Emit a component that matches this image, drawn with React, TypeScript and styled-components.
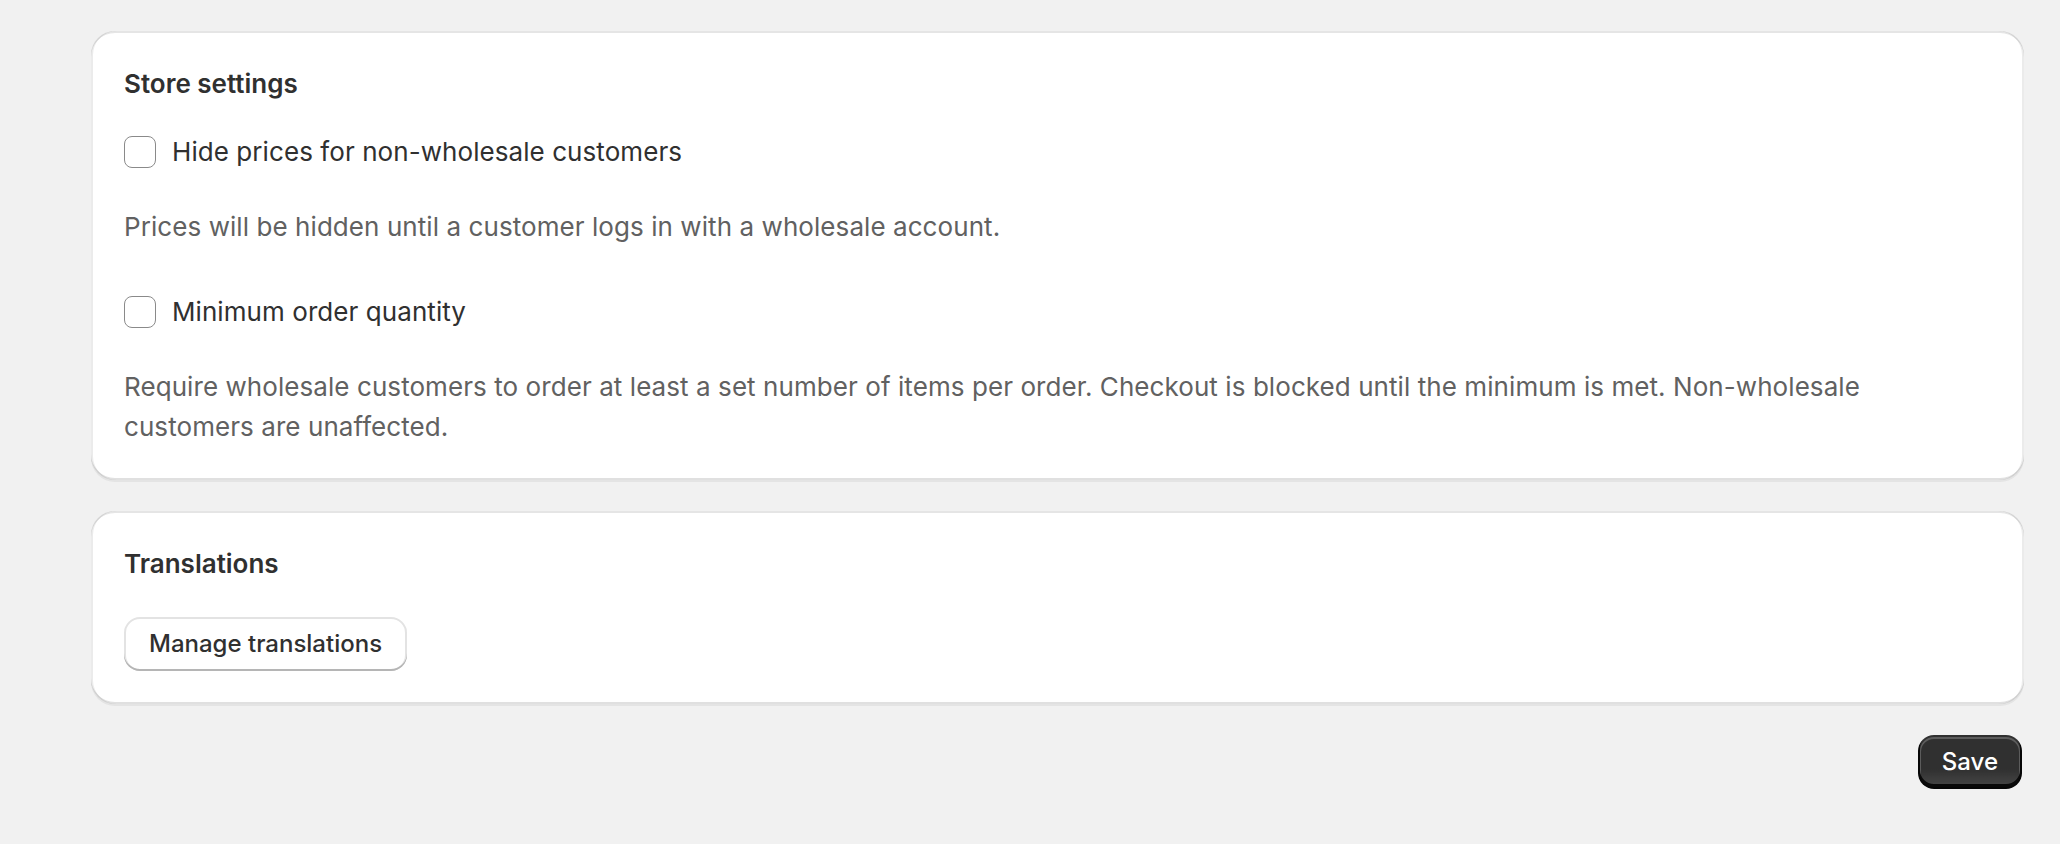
import React from "react";
import styled, { createGlobalStyle } from "styled-components";

const GlobalStyle = createGlobalStyle`
  html, body {
    margin: 0;
    padding: 0;
    background: #f1f1f1;
  }
  body {
    font-family: Inter, "Noto Sans", "Liberation Sans", sans-serif;
    color: #303030;
    -webkit-font-smoothing: antialiased;
  }
  * { box-sizing: border-box; }
`;

const Page = styled.main`
  min-height: 844px;
  padding: 31px 36px 0 91px;
  display: flex;
  flex-direction: column;
  gap: 31px;
`;

const Card = styled.section`
  background: #ffffff;
  border-radius: 24px;
  padding: 33px;
  display: flex;
  flex-direction: column;
  box-shadow:
    inset 2px 0 0 rgba(0, 0, 0, 0.08),
    inset -2px 0 0 rgba(0, 0, 0, 0.08),
    inset 0 -2px 0 rgba(0, 0, 0, 0.12),
    inset 0 2px 0 rgba(204, 204, 204, 0.5),
    0 2px 0 rgba(26, 26, 26, 0.06);
`;

const Heading = styled.h2`
  margin: 0;
  font-size: 26px;
  line-height: 40px;
  font-weight: 600;
  color: #303030;
`;

const CheckRow = styled.label<{ $top: number }>`
  display: flex;
  align-items: center;
  gap: 16px;
  height: 40px;
  margin-top: ${(p) => p.$top}px;
  cursor: pointer;
`;

const Box = styled.span`
  width: 32px;
  height: 32px;
  flex: none;
  border: 1.5px solid #8a8a8a;
  border-radius: 8px;
  background: #fff;
`;

const Label = styled.span`
  font-size: 26px;
  line-height: 40px;
  font-weight: 400;
  letter-spacing: 0.07px;
  color: #303030;
`;

const Help = styled.p`
  margin: 35px 0 0;
  font-size: 26px;
  line-height: 40px;
  font-weight: 400;
  letter-spacing: 0.07px;
  color: #616161;
`;

const SecondaryButton = styled.button`
  align-self: flex-start;
  margin-top: 33px;
  height: 54px;
  padding: 0 25px 2px;
  border: none;
  border-radius: 16px;
  background: #ffffff;
  font-family: inherit;
  font-size: 24px;
  font-weight: 550;
  color: #303030;
  box-shadow:
    inset 0 -2px 0 #b5b5b5,
    inset 0 0 0 2px #e3e3e3;
  cursor: pointer;
`;

const Footer = styled.div`
  display: flex;
  justify-content: flex-end;
  padding-right: 2px;
`;

const PrimaryButton = styled.button`
  height: 54px;
  padding: 0 24px 2px;
  border: none;
  border-radius: 16px;
  background: linear-gradient(180deg, rgba(48, 48, 48, 0) 63%, rgba(255, 255, 255, 0.12) 100%), #303030;
  font-family: inherit;
  font-size: 24px;
  font-weight: 550;
  color: #ffffff;
  box-shadow:
    inset 0 -3px 0 2px rgba(0, 0, 0, 0.85),
    inset 0 0 0 2px #303030,
    inset 0 1px 0 3px #5c5c5c;
  cursor: pointer;
`;

export default function App() {
  return (
    <>
      <GlobalStyle />
      <Page>
        <Card>
          <Heading>Store settings</Heading>
          <CheckRow $top={28}>
            <Box />
            <Label>Hide prices for non-wholesale customers</Label>
          </CheckRow>
          <Help>Prices will be hidden until a customer logs in with a wholesale account.</Help>
          <CheckRow $top={45}>
            <Box />
            <Label>Minimum order quantity</Label>
          </CheckRow>
          <Help>
            Require wholesale customers to order at least a set number of items per order. Checkout is blocked until
            the minimum is met. Non-wholesale customers are unaffected.
          </Help>
        </Card>
        <Card>
          <Heading>Translations</Heading>
          <SecondaryButton>Manage translations</SecondaryButton>
        </Card>
        <Footer>
          <PrimaryButton>Save</PrimaryButton>
        </Footer>
      </Page>
    </>
  );
}
